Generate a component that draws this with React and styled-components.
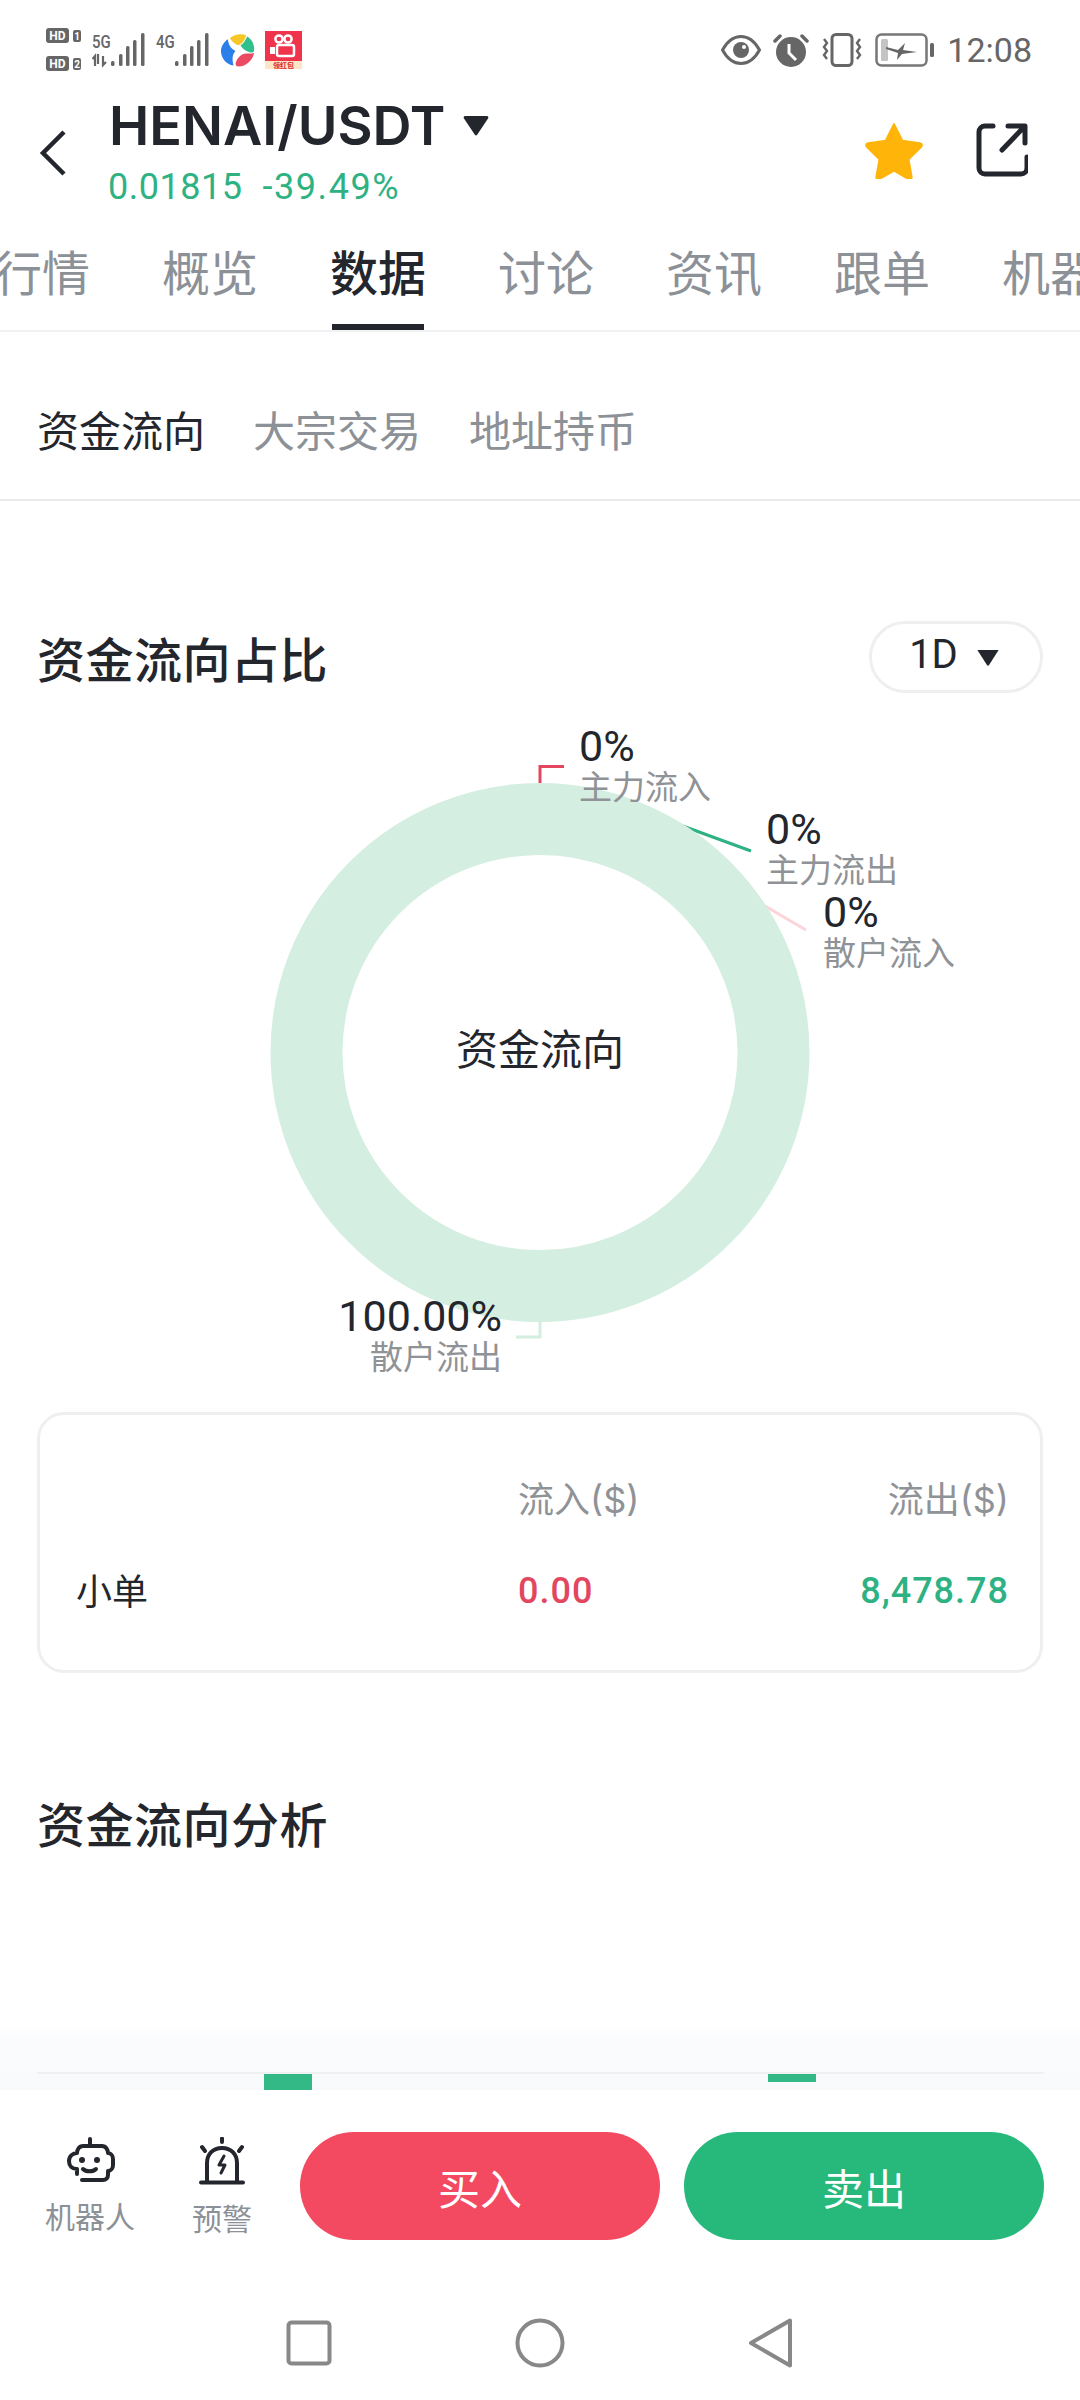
import React from "react";
import styled, { createGlobalStyle } from "styled-components";

const Global = createGlobalStyle`
  html, body { margin: 0; padding: 0; background: #fff; }
  body { font-family: Inter, "Noto Sans CJK SC", sans-serif; color: #24262d; }
  * { box-sizing: border-box; }
`;
const CJK = `Inter, "Noto Sans CJK SC", sans-serif`;
const NUM = `Roboto, "Noto Sans CJK SC", sans-serif`;
const GREEN = "#2eb283";
const RED = "#e2475f";

const Page = styled.div`
  width: 1080px; height: 2400px; display: flex; flex-direction: column; overflow: hidden; background: #fff;
`;
const StatusBar = styled.div`
  height: 100px; flex: none; padding: 0 48px 0 46px; display: flex; align-items: center; justify-content: space-between; color: #666;
`;
const StatusGroup = styled.div`display: flex; align-items: center; gap: ${p => p.$gap || 12}px;`;
const Clock = styled.span`font: 400 34px Roboto, sans-serif; color: #666;`;

const Header = styled.header`
  height: 106px; flex: none; padding: 0 52px 0 39px; display: flex; align-items: center;
`;
const Back = styled.svg`width: 28px; height: 48px; flex: none;`;
const TitleBlock = styled.div`margin-left: 42px; flex: 1; display: flex; flex-direction: column;`;
const TitleRow = styled.div`display: flex; align-items: center; gap: 18px;`;
const Title = styled.h1`margin: 0; font: 600 54px/60px Inter, sans-serif; color: #24262d;`;
const Caret = styled.svg`width: ${p => p.$w}px; height: ${p => p.$h}px; flex: none;`;
const PriceRow = styled.div`display: flex; gap: 20px; margin-top: 8px; margin-left: -1px; font: 400 36px/46px Roboto, sans-serif; letter-spacing: 0.5px; color: ${GREEN};`;
const Change = styled.span`letter-spacing: 1.6px;`;
const HeaderActions = styled.div`display: flex; align-items: center; gap: 52px; margin-top: -6px;`;

const Tabs = styled.nav`
  height: 126px; flex: none; border-bottom: 2px solid #f1f2f3; overflow: hidden;
`;
const TabsTrack = styled.div`display: flex; gap: 72px; margin-left: -6px;`;
const Tab = styled.div`
  flex: none; height: 124px; position: relative; display: flex; align-items: center; padding: 10px 0 6px; font: ${p => p.$active ? 500 : 400} 48px ${CJK};
  color: ${p => p.$active ? "#24262d" : "#8c9197"};
  &::after {
    content: ""; position: absolute; left: 2px; right: 2px; bottom: 0; height: 6px;
    background: ${p => p.$active ? "#24262d" : "transparent"};
  }
`;

const SubTabs = styled.div`
  height: 169px; flex: none; padding: 25px 37px 0; display: flex; align-items: center; gap: 48px; border-bottom: 2px solid #e9eaec;
`;
const SubTab = styled.div`font: 400 42px ${CJK}; color: ${p => p.$active ? "#24262d" : "#8c9197"};`;

const Section = styled.section`padding: 0 37px; flex: none;`;
const SectionHead = styled.div`
  height: 72px; margin-top: ${p => p.$top}px; display: flex; align-items: center; justify-content: space-between;
`;
const SectionTitle = styled.h2`margin: 0; font: 500 48px ${CJK}; letter-spacing: 0.5px; color: #24262d;`;
const Pill = styled.div`
  width: 174px; height: 72px; border: 3px solid #eeeff0; border-radius: 36px; display: flex; align-items: center; justify-content: center; gap: 18px; font: 400 40px Roboto, sans-serif; color: #24262d;
`;
const PillText = styled.span`margin-top: -6px; margin-left: -3px;`;

const Chart = styled.div`position: relative; height: 719px; margin: 0 -37px;`;
const ChartSvg = styled.svg`position: absolute; left: 0; top: 0; width: 1080px; height: 719px;`;
const CenterLabel = styled.div`
  position: absolute; left: 0; right: 0; top: 327px; text-align: center; font: 400 42px/60px ${CJK}; color: #24262d;
`;
const Slice = styled.div`
  position: absolute; top: ${p => p.$top}px; display: flex; flex-direction: column;
  ${p => p.$right ? `right: ${p.$right}px; align-items: flex-end;` : `left: ${p.$left}px; align-items: flex-start;`}
`;
const SlicePct = styled.div`font: 400 43px/43px Roboto, sans-serif; color: #24262d;`;
const SliceName = styled.div`font: 400 33px/38px ${CJK}; color: #8f9296;`;

const Card = styled.div`
  height: 261px; border: 3px solid #eeeff0; border-radius: 27px; padding: 59px 31px 0 36px;
  display: grid; grid-template-columns: 442px 1fr 1fr; grid-auto-rows: 92px; align-items: start;
`;
const Cell = styled.div`
  font: 400 36px/52px ${CJK}; color: ${p => p.$c || "#24262d"}; text-align: ${p => p.$right ? "right" : "left"};
`;
const Amount = styled.div`
  font: 500 36px/50px ${NUM}; letter-spacing: 1px; color: ${p => p.$c}; text-align: ${p => p.$right ? "right" : "left"};
`;

const Stub = styled.div`
  flex: 1; position: relative;
  background: linear-gradient(180deg, #ffffff calc(100% - 70px), #fbfcfd calc(100% - 50px), #f8f9fb 100%);
`;
const StubInner = styled.div`
  position: absolute; left: 37px; right: 36px; bottom: 0; height: 18px; border-top: 2px solid #eef0f2;
`;
const StubBar = styled.div`
  position: absolute; top: 0; left: ${p => p.$left}px; width: 48px; height: ${p => p.$h}px; background: #33b985;
`;

const ActionBar = styled.div`
  height: 200px; flex: none; padding: 42px 36px 0 0; display: flex; align-items: flex-start; background: #fff;
`;
const Tools = styled.div`width: 300px; flex: none; display: flex; padding: 5px 0 0 45px; gap: 45px;`;
const Tool = styled.div`
  width: ${p => p.$w}px; flex: none; display: flex; flex-direction: column; align-items: center;
`;
const ToolLabel = styled.div`font: 400 30px/40px ${CJK}; color: #8c9197; margin-top: 14px;`;
const ActionButton = styled.button`
  flex: none; width: 360px; height: 108px; border: 0; border-radius: 54px; margin-right: 24px; color: #fff; font: 400 42px ${CJK};
  background: ${p => p.$bg};
  &:last-child { margin-right: 0; }
`;

const NavBar = styled.div`
  height: 110px; flex: none; display: flex; justify-content: center; align-items: center; gap: 183px; padding-bottom: 4px;
`;

const Bars = () => (
  <>
    <rect x="19" y="29" width="3.500" height="5" rx="1.500" fill="#666" />
    <rect x="27" y="22" width="3.500" height="12" rx="1.500" fill="#666" />
    <rect x="34" y="14" width="3.500" height="20" rx="1.500" fill="#666" />
    <rect x="41" y="8" width="3.500" height="26" rx="1.500" fill="#666" />
    <rect x="49" y="1" width="3.500" height="33" rx="1.500" fill="#666" />
  </>
);

const NetworkLabel = ({ children }) => (
  <text x="0" y="13" transform="scale(1 1.200)" fontFamily="Roboto" fontWeight="500" fontSize="15" fill="#666">{children}</text>
);

const StatusIcons = () => (
  <StatusGroup $gap={10}>
    <svg width="36" height="44" viewBox="0 0 36 44">
      <rect x="0" y="0" width="23" height="15" rx="3" fill="#666" />
      <text x="11.500" y="12" textAnchor="middle" fontFamily="Roboto" fontWeight="700" fontSize="12" fill="#fff">HD</text>
      <rect x="27" y="2" width="8" height="12" rx="2" fill="#666" />
      <text x="31" y="12" textAnchor="middle" fontFamily="Roboto" fontWeight="700" fontSize="10" fill="#fff">1</text>
      <rect x="0" y="28" width="23" height="15" rx="3" fill="#666" />
      <text x="11.500" y="40" textAnchor="middle" fontFamily="Roboto" fontWeight="700" fontSize="12" fill="#fff">HD</text>
      <rect x="27" y="30" width="8" height="12" rx="2" fill="#666" />
      <text x="31" y="40" textAnchor="middle" fontFamily="Roboto" fontWeight="700" fontSize="10" fill="#fff">2</text>
    </svg>
    <svg width="54" height="36" viewBox="0 0 54 36">
      <NetworkLabel>5G</NetworkLabel>
      <path d="M3 34V24l-2.500 3M6 22v10M11 24v9l3-3" stroke="#666" strokeWidth="2.200" fill="none" />
      <Bars />
    </svg>
    <svg width="54" height="36" viewBox="0 0 54 36">
      <NetworkLabel>4G</NetworkLabel>
      <Bars />
    </svg>
    <svg width="35" height="36" viewBox="0 0 36 36">
      <path d="M10 6C15 1 23 1 27 3c-2 6-5 9-8 10-3 0-6-3-9-7z" fill="#f6c726" />
      <path d="M28 4c5 3 8 9 7 15-1 2-3 2-5 1-4-1-7-4-9-7 3-1 5-5 7-9z" fill="#2fc08c" />
      <path d="M35 21c-1 7-8 14-16 14-2 0-3-1-3-3 1-5 5-9 8-10 4-1 8 0 11-1z" fill="#ec4a63" />
      <path d="M14 34C6 33 1 26 1 19c0-5 4-10 7-12 1 5 2 9 8 12-3 3-4 8-2 15z" fill="#2b7fe8" />
    </svg>
    <svg width="37" height="38" viewBox="0 0 37 38">
      <rect width="37" height="38" fill="#f0344b" />
      <rect y="30" width="37" height="8" fill="#fde6c6" />
      <g fill="none" stroke="#fff" strokeWidth="2.500">
        <circle cx="14" cy="8" r="3.600" />
        <circle cx="23" cy="8" r="3.600" />
        <rect x="12" y="14" width="17" height="11" rx="2" />
      </g>
      <path d="M5 16h5v7H5z" fill="#fff" />
      <text x="18.500" y="36.500" textAnchor="middle" fontFamily="Noto Sans CJK SC" fontWeight="700" fontSize="7" fill="#d8202f">领红包</text>
    </svg>
  </StatusGroup>
);

const StatusRight = () => (
  <StatusGroup $gap={12}>
    <svg width="40" height="32" viewBox="0 0 40 32">
      <path d="M1.500 16C7 6 14 2.500 20 2.500S33 6 38.500 16C33 26 26 29.500 20 29.500S7 26 1.500 16z" fill="none" stroke="#666" strokeWidth="3" />
      <circle cx="20" cy="16" r="8" fill="#666" />
      <circle cx="23" cy="13" r="2" fill="#fff" />
    </svg>
    <svg width="36" height="34" viewBox="0 0 36 34">
      <circle cx="18" cy="19" r="15" fill="#666" />
      <path d="M16 11v9l7 7" stroke="#fff" strokeWidth="3" fill="none" />
      <path d="M2 8l5-5M34 8l-5-5" stroke="#666" strokeWidth="3.500" strokeLinecap="round" />
    </svg>
    <svg width="42" height="34" viewBox="0 0 42 34">
      <rect x="11" y="1.500" width="20" height="31" rx="4" fill="none" stroke="#666" strokeWidth="3" />
      <path d="M3 6l3 4-3 4 3 4-3 4 3 4M39 6l-3 4 3 4-3 4 3 4-3 4" fill="none" stroke="#666" strokeWidth="2.400" />
    </svg>
    <svg width="60" height="34" viewBox="0 0 60 34">
      <rect x="1.500" y="1.500" width="50" height="31" rx="5" fill="none" stroke="#777" strokeWidth="2.500" />
      <rect x="6" y="6" width="7" height="22" rx="1.500" fill="#c4c4c4" />
      <rect x="55" y="10" width="4" height="14" rx="1.500" fill="#666" />
      <path d="M11 14l12 3 7-7-2 7 14 2-15 2-5 6 1-7-12-4z" fill="#666" />
    </svg>
    <Clock>12:08</Clock>
  </StatusGroup>
);

const Robot = () => (
  <svg width="50" height="46" viewBox="0 0 50 46" fill="none" stroke="#24262d" strokeWidth="4" strokeLinecap="round" strokeLinejoin="round">
    <path d="M25 2v6" />
    <path d="M17 43h21c3 0 5-2 5-5v-4c3 0 5-3 5-6v-6c0-3-2-6-5-6 0-3-2-7-6-7H18c-4 0-6 4-6 7-4 0-8 3-8 8 0 5 3 8 8 8v5" />
    <circle cx="17" cy="23" r="3" fill="#24262d" stroke="none" />
    <circle cx="32" cy="23" r="3" fill="#24262d" stroke="none" />
    <path d="M18 32c3 3 10 3 13 0" />
  </svg>
);
const Siren = () => (
  <svg width="46" height="48" viewBox="0 0 46 48" fill="none" stroke="#24262d" strokeLinecap="round" strokeLinejoin="round">
    <path d="M2 45.500h42" strokeWidth="4" />
    <path d="M8 45V26c0-9 6-15 15-15s15 6 15 15v19" strokeWidth="4" />
    <path d="M23 1.500v3.500M3 10l3 4M43 10l-3 4" strokeWidth="4" />
    <path d="M25 19l-5 9h6l-4 8" strokeWidth="3" />
  </svg>
);

const tabs = ["行情", "概览", "数据", "讨论", "资讯", "跟单", "机器人"];

export default function App() {
  return (
    <Page>
      <Global />
      <StatusBar>
        <StatusIcons />
        <StatusRight />
      </StatusBar>
      <Header>
        <Back viewBox="0 0 28 48">
          <path d="M25 3L4 24l21 21" fill="none" stroke="#24262d" strokeWidth="4.500" />
        </Back>
        <TitleBlock>
          <TitleRow>
            <Title>HENAI/USDT</Title>
            <Caret $w={26} $h={22} viewBox="0 0 26 22"><path d="M2 1h22a1.500 1.500 0 0 1 1 2.500L14 20a1.500 1.500 0 0 1-2 0L1 3.500A1.500 1.500 0 0 1 2 1z" fill="#24262d" /></Caret>
          </TitleRow>
          <PriceRow><span>0.01815</span><Change>-39.49%</Change></PriceRow>
        </TitleBlock>
        <HeaderActions>
          <svg width="60" height="58" viewBox="0 0 58 56">
            <path d="M29 3l8 16 17 2.500c2 .3 2.500 2 1 3.500L43 37l3 17c.3 2-1.500 3-3 2L29 48l-14 8c-1.500 1-3.300 0-3-2l3-17L3 25c-1.500-1.500-1-3.200 1-3.500L21 19z" fill="#ffb40a" stroke="#ffb40a" strokeWidth="2" strokeLinejoin="round" />
          </svg>
          <svg width="52" height="54" viewBox="0 0 52 54" fill="none" stroke="#24262d" strokeWidth="5" strokeLinecap="round" strokeLinejoin="round">
            <path d="M17 3H9a6 6 0 0 0-6 6v36a6 6 0 0 0 6 6h36a6 6 0 0 0 6-6v-11" />
            <path d="M26 27L48 4M32 3h17v17" />
          </svg>
        </HeaderActions>
      </Header>
      <Tabs>
        <TabsTrack>
          {tabs.map(t => <Tab key={t} $active={t === "数据"}>{t}</Tab>)}
        </TabsTrack>
      </Tabs>
      <SubTabs>
        <SubTab $active>资金流向</SubTab>
        <SubTab>大宗交易</SubTab>
        <SubTab>地址持币</SubTab>
      </SubTabs>
      <Section>
        <SectionHead $top={120}>
          <SectionTitle>资金流向占比</SectionTitle>
          <Pill>
            <PillText>1D</PillText>
            <Caret $w={24} $h={17} viewBox="0 0 22 16"><path d="M1 1h20L12 15a1.200 1.200 0 0 1-2 0z" fill="#24262d" /></Caret>
          </Pill>
        </SectionHead>
        <Chart>
          <ChartSvg viewBox="0 0 1080 719">
            <path d="M564 73.500H540V110" fill="none" stroke="#e2475f" strokeWidth="3" />
            <path d="M680 132L751 158" fill="none" stroke={GREEN} strokeWidth="3" />
            <path d="M760 210L806 237" fill="none" stroke="#fbd5da" strokeWidth="3" />
            <path d="M540 620V644H516" fill="none" stroke="#d4eee1" strokeWidth="3" />
            <circle cx="540" cy="359.500" r="233.500" fill="none" stroke="#d4eee1" strokeWidth="72" />
          </ChartSvg>
          <CenterLabel>资金流向</CenterLabel>
          <Slice $left={579} $top={32}><SlicePct>0%</SlicePct><SliceName>主力流入</SliceName></Slice>
          <Slice $left={766} $top={115}><SlicePct>0%</SlicePct><SliceName>主力流出</SliceName></Slice>
          <Slice $left={823} $top={198}><SlicePct>0%</SlicePct><SliceName>散户流入</SliceName></Slice>
          <Slice $right={578} $top={602}><SlicePct>100.00%</SlicePct><SliceName>散户流出</SliceName></Slice>
        </Chart>
        <Card>
          <Cell />
          <Cell $c="#8f9296">流入($)</Cell>
          <Cell $c="#8f9296" $right>流出($)</Cell>
          <Cell>小单</Cell>
          <Amount $c={RED}>0.00</Amount>
          <Amount $c={GREEN} $right>8,478.78</Amount>
        </Card>
        <SectionHead $top={113}>
          <SectionTitle>资金流向分析</SectionTitle>
        </SectionHead>
      </Section>
      <Stub>
        <StubInner>
          <StubBar $left={227} $h={16} />
          <StubBar $left={731} $h={8} />
        </StubInner>
      </Stub>
      <ActionBar>
        <Tools>
          <Tool $w={90}><Robot /><ToolLabel>机器人</ToolLabel></Tool>
          <Tool $w={84}><Siren /><ToolLabel>预警</ToolLabel></Tool>
        </Tools>
        <ActionButton $bg="#f44a61">买入</ActionButton>
        <ActionButton $bg="#27b97c">卖出</ActionButton>
      </ActionBar>
      <NavBar>
        <svg width="46" height="46" viewBox="0 0 46 46"><rect x="2.500" y="2.500" width="41" height="41" rx="3" fill="none" stroke="#888" strokeWidth="4" /></svg>
        <svg width="50" height="50" viewBox="0 0 50 50"><circle cx="25" cy="25" r="22.500" fill="none" stroke="#888" strokeWidth="4" /></svg>
        <svg width="46" height="52" viewBox="0 0 46 52"><path d="M42 3.500v45L3 26z" fill="none" stroke="#888" strokeWidth="4" strokeLinejoin="round" /></svg>
      </NavBar>
    </Page>
  );
}
